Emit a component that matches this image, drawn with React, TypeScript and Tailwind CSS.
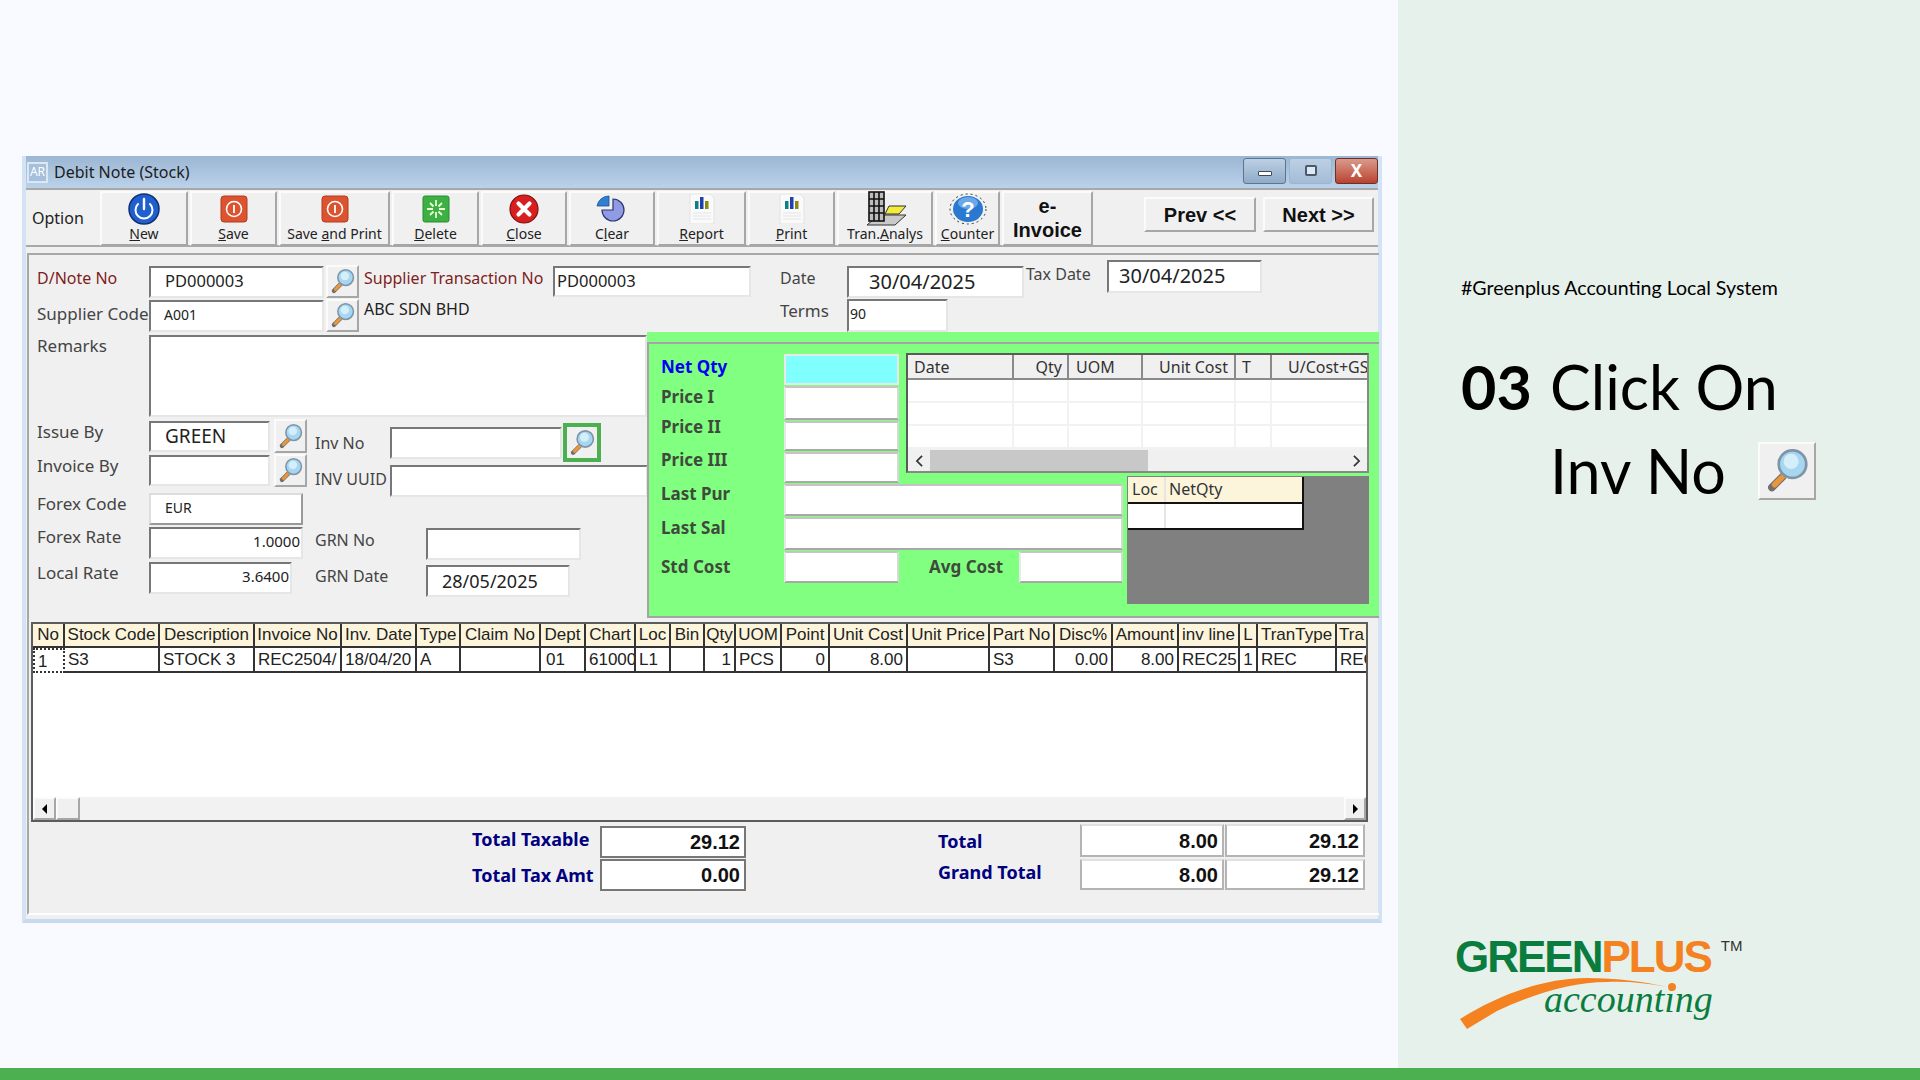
import type { ReactNode } from 'react';

const inset = 'border-2 border-t-[#777] border-l-[#777] border-r-[#e6e6e6] border-b-[#e6e6e6] bg-white';
const label = 'text-[16px] leading-[22px] text-[#444]';
const labelLg = 'text-[17px] leading-[22px] text-[#444]';
const greenInput = 'border-2 border-t-[#c4c4c4] border-l-[#e8e8e8] border-r-[#d8d8d8] border-b-[#a8a8a8] bg-white';
const raised = 'border-2 border-t-[#fbfbfb] border-l-[#fbfbfb] border-r-[#a6a6a6] border-b-[#a6a6a6] bg-[#f0f0f0]';

function Magnifier({ className }: { className: string }) {
  return (
    <svg viewBox="0 0 32 32" className={className}>
      <path d="M13 20 L5 28" stroke="#6f6f6f" strokeWidth="5.5" strokeLinecap="round" />
      <path d="M14 19 L7 26" stroke="#e8983a" strokeWidth="4" strokeLinecap="round" />
      <circle cx="20" cy="11" r="10" fill="#a6d6f0" stroke="#7f94a6" strokeWidth="2" />
      <circle cx="19" cy="9" r="5.5" fill="#d4eefa" />
    </svg>
  );
}

function LookupButton({ className }: { className: string }) {
  return (
    <div className={`flex items-center justify-center ${raised} ${className}`}>
      <Magnifier className="h-[25px] w-[25px]" />
    </div>
  );
}

function NewIcon() {
  return (
    <svg viewBox="0 0 32 32" className="h-[32px] w-[32px]">
      <circle cx="16" cy="16" r="15" fill="#1f5fd0" stroke="#12306f" strokeWidth="1.5" />
      <path d="M10 11 A8.5 8.5 0 1 0 22 11" fill="none" stroke="#fff" strokeWidth="2" strokeLinecap="round" />
      <path d="M16 6 V16" stroke="#fff" strokeWidth="2.4" strokeLinecap="round" />
    </svg>
  );
}

function SaveIcon() {
  return (
    <svg viewBox="0 0 28 28" className="h-[28px] w-[28px]">
      <rect x="1" y="1" width="26" height="26" rx="3" fill="#dc5330" stroke="#b23c1e" />
      <circle cx="14" cy="14" r="7.5" fill="none" stroke="#fff" strokeWidth="1.6" />
      <path d="M14 10 V18" stroke="#fff" strokeWidth="1.8" />
    </svg>
  );
}

function DeleteIcon() {
  return (
    <svg viewBox="0 0 28 28" className="h-[28px] w-[28px]">
      <rect x="1" y="1" width="26" height="26" rx="2" fill="#3cb043" stroke="#2a8a30" />
      <path d="M14 5 V11 M14 17 V23 M5 14 H11 M17 14 H23 M8 8 L11.5 11.5 M16.5 16.5 L20 20 M20 8 L16.5 11.5 M11.5 16.5 L8 20" stroke="#e8ffd8" strokeWidth="1.8" />
    </svg>
  );
}

function CloseIcon() {
  return (
    <svg viewBox="0 0 30 30" className="h-[30px] w-[30px]">
      <circle cx="15" cy="15" r="14" fill="#d81e1e" stroke="#7c1010" strokeWidth="1.2" />
      <path d="M9.5 9.5 L20.5 20.5 M20.5 9.5 L9.5 20.5" stroke="#fff" strokeWidth="4.2" strokeLinecap="round" />
    </svg>
  );
}

function ClearIcon() {
  return (
    <svg viewBox="0 0 32 28" className="h-[28px] w-[32px]">
      <path d="M17 4 A11 11 0 1 1 6 15 H17 Z" fill="#8f9be4" stroke="#2f3570" strokeWidth="1.2" />
      <path d="M1 11 A12 12 0 0 1 13 1 V11 Z" fill="#2f7fd4" stroke="#1e4f8c" strokeWidth="0.8" />
    </svg>
  );
}

function ReportIcon() {
  return (
    <svg viewBox="0 0 26 30" className="h-[30px] w-[26px]">
      <path d="M1 0 H21 L25 4 V30 H1 Z" fill="#fafafa" stroke="#e2e2e2" />
      <rect x="6" y="7" width="3.5" height="8" fill="#0f7f86" />
      <rect x="11" y="3" width="3.5" height="12" fill="#1f3fb0" />
      <rect x="16" y="7" width="3.5" height="8" fill="#8a8a12" />
      <path d="M4 19 H22 M4 22 H22 M4 25 H22" stroke="#e4e4e4" />
    </svg>
  );
}

function TranIcon() {
  return (
    <svg viewBox="0 0 44 36" className="h-[36px] w-[44px]">
      <path d="M16 24 H43 L32 34 H4 Z" fill="#c9c9c9" stroke="#333" />
      <path d="M26 15 H43 L36 23 H22 Z" fill="#f4ec3a" stroke="#333" />
      <rect x="6" y="1" width="15" height="29" fill="#bdbdbd" stroke="#111" strokeWidth="1.6" />
      <path d="M11 1 V30 M16 1 V30 M6 8 H21 M6 15 H21 M6 22 H21" stroke="#111" strokeWidth="1.6" />
    </svg>
  );
}

function CounterIcon() {
  return (
    <svg viewBox="0 0 38 32" className="h-[32px] w-[38px]">
      <ellipse cx="19" cy="16" rx="18" ry="15" fill="none" stroke="#333" strokeWidth="1" strokeDasharray="2 3" />
      <ellipse cx="19" cy="16" rx="15" ry="13" fill="#2a78d0" />
      <ellipse cx="19" cy="10" rx="10" ry="6" fill="#6aa8e8" />
      <text x="19" y="24" textAnchor="middle" fontSize="22" fontWeight="700" fill="#fff" fontFamily="Liberation Sans, sans-serif">?</text>
    </svg>
  );
}

function ToolButton({ icon, children, className }: { icon: ReactNode; children: ReactNode; className: string }) {
  return (
    <div className={`flex flex-col items-center ${raised} ${className}`}>
      <div className="flex h-[31px] items-center justify-center">{icon}</div>
      <div className="text-[14px] leading-[20px] text-[#222]">{children}</div>
    </div>
  );
}

function Toolbar() {
  return (
    <div className="flex h-[59px] items-start border-y-2 border-[#a8a8a8] bg-[#f0f0f0] pt-[1px]">
      <div className="flex h-[53px] w-[74px] items-center pl-[6px] text-[16px] text-[#222]">Option</div>
      <div className="flex gap-[2px]">
        <ToolButton icon={<NewIcon />} className="h-[55px] w-[88px]"><u>N</u>ew</ToolButton>
        <ToolButton icon={<SaveIcon />} className="h-[55px] w-[87px]"><u>S</u>ave</ToolButton>
        <ToolButton icon={<SaveIcon />} className="h-[55px] w-[111px]">Save <u>a</u>nd Print</ToolButton>
        <ToolButton icon={<DeleteIcon />} className="h-[55px] w-[87px]"><u>D</u>elete</ToolButton>
        <ToolButton icon={<CloseIcon />} className="h-[55px] w-[86px]"><u>C</u>lose</ToolButton>
        <ToolButton icon={<ClearIcon />} className="h-[55px] w-[86px]">C<u>l</u>ear</ToolButton>
        <ToolButton icon={<ReportIcon />} className="h-[55px] w-[89px]"><u>R</u>eport</ToolButton>
        <ToolButton icon={<ReportIcon />} className="h-[55px] w-[87px]"><u>P</u>rint</ToolButton>
        <ToolButton icon={<TranIcon />} className="h-[55px] w-[96px]">Tran.<u>A</u>nalys</ToolButton>
        <ToolButton icon={<CounterIcon />} className="h-[55px] w-[65px]"><u>C</u>ounter</ToolButton>
        <div className={`flex h-[55px] w-[91px] flex-col items-center justify-center pb-[2px] font-['Liberation_Sans',sans-serif] text-[20px] leading-[24px] font-bold text-[#111] ${raised}`}>
          <span>e-</span>
          <span>Invoice</span>
        </div>
      </div>
      <div className="mt-[6px] ml-[51px] flex gap-[7px] font-['Liberation_Sans',sans-serif] text-[20px] font-bold text-[#111]">
        <div className={`flex h-[35px] w-[112px] items-center justify-center ${raised}`}>{'Prev <<'}</div>
        <div className={`flex h-[35px] w-[111px] items-center justify-center ${raised}`}>{'Next >>'}</div>
      </div>
    </div>
  );
}

function TitleBar() {
  return (
    <div className="flex h-[32px] items-center bg-gradient-to-b from-[#9cb6d3] to-[#bad2ea]">
      <div className="ml-[1px] flex h-[21px] w-[21px] items-center justify-center border-2 border-[#dbe8f4] bg-[#a5bfdc] text-[12px] text-white">AR</div>
      <div className="ml-[6px] text-[16px] leading-[22px] text-[#1c1c1c]">Debit Note (Stock)</div>
      <div className="mb-[3px] ml-auto flex h-[26px] gap-[3px]">
        <div className="flex w-[43px] items-center justify-center rounded-[3px] border border-[#5d7590] bg-gradient-to-b from-[#bdd0e4] to-[#90abc8]">
          <div className="mt-[6px] h-[5px] w-[14px] rounded-[1px] border border-[#3a4a5c] bg-white" />
        </div>
        <div className="flex w-[43px] items-center justify-center rounded-[3px] border border-[#9db6d0] bg-gradient-to-b from-[#bdd0e4] to-[#a3bcd6]">
          <div className="h-[11px] w-[12px] rounded-[2px] border-2 border-[#4a5a6c] bg-[#dfe9f3]" />
        </div>
        <div className="flex w-[43px] items-center justify-center rounded-[3px] border border-[#6d3028] bg-gradient-to-b from-[#d99a8c] to-[#b8402e] text-[17px] leading-none font-bold text-white">X</div>
      </div>
    </div>
  );
}

function HeaderRows() {
  return (
    <div className="flex h-[77px]">
      <div className="ml-[8px] w-[322px] pt-[10px]">
        <div className="flex h-[33px] items-center">
          <div className={`mb-[8px] w-[112px] ${label} !text-[#7f1d1d]`}>D/Note No</div>
          <div className={`flex h-[32px] w-[175px] items-center pb-[1px] pl-[14px] text-[16.5px] text-[#222] ${inset}`}>PD000003</div>
          <LookupButton className="ml-[2px] h-[33px] w-[33px]" />
        </div>
        <div className="mt-[1px] flex h-[33px] items-center">
          <div className={`mb-[4px] w-[112px] whitespace-nowrap ${labelLg}`}>Supplier Code</div>
          <div className={`flex h-[32px] w-[175px] items-center pb-[3px] pl-[13px] text-[14px] text-[#222] ${inset}`}>A001</div>
          <LookupButton className="ml-[2px] h-[33px] w-[33px]" />
        </div>
      </div>
      <div className="ml-[5px] w-[387px] pt-[10px]">
        <div className="flex h-[33px] items-center">
          <div className={`mb-[7px] w-[189px] whitespace-nowrap ${label} !text-[#7f1d1d]`}>Supplier Transaction No</div>
          <div className={`flex h-[31px] w-[198px] items-center pb-[1px] pl-[2px] text-[16.5px] text-[#222] ${inset}`}>PD000003</div>
        </div>
        <div className="mt-[1px] flex h-[33px] items-center">
          <div className={`mb-[13px] ${label} !text-[#222]`}>ABC SDN BHD</div>
        </div>
      </div>
      <div className="ml-[29px] w-[244px] pt-[10px]">
        <div className="flex h-[33px] items-center">
          <div className={`mb-[8px] w-[67px] ${label}`}>Date</div>
          <div className={`flex h-[32px] w-[177px] items-center pt-[1px] pl-[20px] text-[20px] text-[#222] ${inset}`}>30/04/2025</div>
        </div>
        <div className="mt-[1px] flex h-[33px] items-center">
          <div className={`mb-[10px] w-[67px] ${labelLg}`}>Terms</div>
          <div className={`flex h-[33px] w-[101px] items-center pb-[4px] pl-[1px] text-[14px] text-[#222] ${inset}`}>90</div>
        </div>
      </div>
      <div className="mt-[5px] ml-[2px] flex h-[33px] items-center">
        <div className={`mb-[6px] w-[81px] ${label}`}>Tax Date</div>
        <div className={`flex h-[33px] w-[155px] items-center pb-[2px] pl-[10px] text-[20px] text-[#222] ${inset}`}>30/04/2025</div>
      </div>
    </div>
  );
}

function LeftFields() {
  return (
    <div className="w-[618px] pt-[3px] pl-[8px]">
      <div className="flex">
        <div className={`w-[112px] ${labelLg}`}>Remarks</div>
        <div className={`h-[82px] w-[498px] ${inset}`} />
      </div>
      <div className="flex">
        <div className="w-[270px] pt-[2px]">
          <div className="flex h-[34px] items-center">
            <div className={`mb-[8px] w-[112px] ${labelLg}`}>Issue By</div>
            <div className={`flex h-[31px] w-[121px] items-center pt-[1px] pl-[14px] text-[19px] text-[#222] ${inset}`}>GREEN</div>
            <LookupButton className="ml-[4px] h-[34px] w-[33px]" />
          </div>
          <div className="mt-[1px] flex h-[33px] items-center">
            <div className={`mb-[10px] w-[112px] ${labelLg}`}>Invoice By</div>
            <div className={`h-[31px] w-[121px] ${inset}`} />
            <LookupButton className="ml-[4px] h-[33px] w-[33px]" />
          </div>
          <div className="mt-[6px] flex h-[32px] items-center">
            <div className={`mb-[10px] w-[112px] ${labelLg}`}>Forex Code</div>
            <div className={`flex h-[32px] w-[154px] items-center pb-[3px] pl-[14px] text-[14px] text-[#222] ${inset} !border-t-[#ddd] !border-r-[#999] !border-b-[#999] !border-l-[#ddd]`}>EUR</div>
          </div>
          <div className="mt-[2px] flex h-[32px] items-center">
            <div className={`mb-[12px] w-[112px] ${labelLg}`}>Forex Rate</div>
            <div className={`flex h-[32px] w-[154px] items-center justify-end pr-[1px] pb-[4px] text-[15px] text-[#222] ${inset}`}>1.0000</div>
          </div>
          <div className="mt-[3px] flex h-[32px] items-center">
            <div className={`mb-[10px] w-[112px] ${labelLg}`}>Local Rate</div>
            <div className={`flex h-[32px] w-[143px] items-center justify-end pr-[1px] pb-[4px] text-[15px] text-[#222] ${inset}`}>3.6400</div>
          </div>
        </div>
        <div className="ml-[8px] pt-[6px]">
          <div className="flex h-[39px] items-center">
            <div className={`w-[75px] ${label}`}>Inv No</div>
            <div className={`h-[32px] w-[172px] ${inset}`} />
            <div className="ml-[1px] flex h-[39px] w-[38px] items-center justify-center border-4 border-[#4caf50] bg-[#f0f0f0]">
              <Magnifier className="h-[26px] w-[26px]" />
            </div>
          </div>
          <div className="mt-[3px] flex h-[32px] items-center">
            <div className={`mb-[4px] w-[75px] whitespace-nowrap ${label}`}>INV UUID</div>
            <div className={`h-[32px] w-[258px] ${inset}`} />
          </div>
          <div className="mt-[31px] flex h-[32px] items-center">
            <div className={`mb-[8px] w-[111px] ${label}`}>GRN No</div>
            <div className={`h-[32px] w-[155px] ${inset}`} />
          </div>
          <div className="mt-[5px] flex h-[32px] items-center">
            <div className={`mb-[10px] w-[111px] ${label}`}>GRN Date</div>
            <div className={`flex h-[32px] w-[144px] items-center pl-[14px] text-[18px] text-[#222] ${inset}`}>28/05/2025</div>
          </div>
        </div>
      </div>
    </div>
  );
}

const greenLabel = 'text-[17px] leading-[22px] font-bold text-[#3f4a3c]';

function PriceColumn() {
  return (
    <div className="row-span-2 pt-[10px] pl-[12px]">
      <div className="flex h-[31px] items-center">
        <div className="mb-[5px] w-[123px] text-[17px] leading-[22px] font-bold text-[#0000f0]">Net Qty</div>
        <div className="h-[31px] w-[115px] border-2 border-[#e8e8e8] bg-[#80ffff]" />
      </div>
      <div className="mt-[1px] flex h-[34px] items-center">
        <div className={`mb-[12px] w-[123px] ${greenLabel}`}>Price I</div>
        <div className={`h-[34px] w-[115px] ${greenInput}`} />
      </div>
      <div className="mt-[1px] flex h-[30px] items-center">
        <div className={`mb-[18px] w-[123px] ${greenLabel}`}>Price II</div>
        <div className={`h-[30px] w-[115px] ${greenInput}`} />
      </div>
      <div className="mt-[1px] flex h-[31px] items-center">
        <div className={`mb-[16px] w-[123px] ${greenLabel}`}>Price III</div>
        <div className={`h-[31px] w-[115px] ${greenInput}`} />
      </div>
    </div>
  );
}

const historyCols = [
  { name: 'Date', cls: 'pl-[6px] text-left' },
  { name: 'Qty', cls: 'pr-[5px] text-right' },
  { name: 'UOM', cls: 'pl-[7px] text-left' },
  { name: 'Unit Cost', cls: 'pr-[6px] text-right' },
  { name: 'T', cls: 'pl-[6px] text-left' },
  { name: 'U/Cost+GST', cls: 'pl-[16px] text-left' },
];

function HistoryGrid() {
  return (
    <div className="col-span-2 mt-[9px] ml-[1px] h-[120px] w-[463px] overflow-hidden border-2 border-[#5a5a5a] border-r-[#888] border-b-[#888] bg-white">
      <div className="grid h-[25px] grid-cols-[106px_55px_74px_93px_36px_99px] whitespace-nowrap">
        {historyCols.map((c) => (
          <div key={c.name} className={`overflow-hidden border-r-2 border-b-2 border-[#8a8a8a] bg-[#f0f0f0] text-[16px] leading-[24px] text-[#333] ${c.cls}`}>
            {c.name}
          </div>
        ))}
      </div>
      {[0, 1, 2].map((r) => (
        <div key={r} className="grid h-[23px] grid-cols-[106px_55px_74px_93px_36px_99px]">
          {historyCols.map((c) => (
            <div key={c.name} className="border-r-2 border-b-2 border-[#f2f2f2]" />
          ))}
        </div>
      ))}
      <div className="flex h-[24px] items-center bg-[#f0f0f0]">
        <div className="flex w-[22px] justify-center">
          <svg viewBox="0 0 10 14" className="h-[12px] w-[9px]"><path d="M8 1 L2 7 L8 13" fill="none" stroke="#333" strokeWidth="2" /></svg>
        </div>
        <div className="h-[22px] w-[218px] bg-[#c8c8c8]" />
        <div className="ml-auto flex w-[22px] justify-center">
          <svg viewBox="0 0 10 14" className="h-[12px] w-[9px]"><path d="M2 1 L8 7 L2 13" fill="none" stroke="#333" strokeWidth="2" /></svg>
        </div>
      </div>
    </div>
  );
}

function CostRows() {
  return (
    <div className="col-span-2 row-start-3 pl-[12px]">
      <div className="flex h-[32px] items-center">
        <div className={`mb-[12px] w-[123px] ${greenLabel}`}>Last Pur</div>
        <div className={`h-[32px] w-[339px] ${greenInput}`} />
      </div>
      <div className="mt-[1px] flex h-[33px] items-center">
        <div className={`mb-[12px] w-[123px] ${greenLabel}`}>Last Sal</div>
        <div className={`h-[33px] w-[339px] ${greenInput}`} />
      </div>
      <div className="mt-[1px] flex h-[32px] items-center">
        <div className={`w-[123px] ${greenLabel}`}>Std Cost</div>
        <div className={`h-[32px] w-[115px] ${greenInput}`} />
        <div className={`w-[120px] pl-[30px] whitespace-nowrap ${greenLabel}`}>Avg Cost</div>
        <div className={`h-[32px] w-[104px] ${greenInput}`} />
      </div>
    </div>
  );
}

function LocBox() {
  return (
    <div className="col-start-3 row-span-2 row-start-2 bg-[#808080] pt-[1px] pl-[1px]">
      <div className="w-[176px] border-r-2 border-b-2 border-[#111] bg-white text-[16px] text-[#333]">
        <div className="grid h-[27px] grid-cols-[38px_1fr] border-b-2 border-[#111] bg-[#fcf5dc] leading-[24px]">
          <div className="border-r-2 border-[#e5e5e5] pl-[4px]">Loc</div>
          <div className="pl-[3px]">NetQty</div>
        </div>
        <div className="grid h-[24px] grid-cols-[38px_1fr]">
          <div className="border-r-2 border-[#e5e5e5]" />
          <div />
        </div>
      </div>
    </div>
  );
}

function GreenPanel() {
  return (
    <div className="flex w-[732px] flex-col bg-[#80ff80] pt-[10px]">
      <div className="grid flex-1 grid-cols-[256px_222px_242px] grid-rows-[132px_8px_120px] border-t-2 border-b-2 border-l-2 border-[#a4a4a4]">
        <PriceColumn />
        <HistoryGrid />
        <CostRows />
        <LocBox />
      </div>
    </div>
  );
}

const stockCols = 'grid-cols-[32px_95px_95px_87px_75px_44px_80px_45px_50px_35px_34px_31px_46px_48px_78px_82px_65px_58px_66px_61px_18px_79px_31px]';

const stockHeads = ['No', 'Stock Code', 'Description', 'Invoice No', 'Inv. Date', 'Type', 'Claim No', 'Dept', 'Chart', 'Loc', 'Bin', 'Qty', 'UOM', 'Point', 'Unit Cost', 'Unit Price', 'Part No', 'Disc%', 'Amount', 'inv line', 'L', 'TranType', 'Tra'];

const stockRow = [
  { v: '1', cls: 'text-left' },
  { v: 'S3', cls: 'text-left' },
  { v: 'STOCK 3', cls: 'text-left' },
  { v: 'REC2504/', cls: 'text-left' },
  { v: '18/04/20', cls: 'text-left' },
  { v: 'A', cls: 'text-left' },
  { v: '', cls: 'text-left' },
  { v: '01', cls: 'text-left pl-[5px]' },
  { v: '61000', cls: 'text-left' },
  { v: 'L1', cls: 'text-left' },
  { v: '', cls: 'text-left' },
  { v: '1', cls: 'text-right' },
  { v: 'PCS', cls: 'text-left' },
  { v: '0', cls: 'text-right' },
  { v: '8.00', cls: 'text-right' },
  { v: '', cls: 'text-left' },
  { v: 'S3', cls: 'text-left' },
  { v: '0.00', cls: 'text-right' },
  { v: '8.00', cls: 'text-right' },
  { v: 'REC25', cls: 'text-left' },
  { v: '1', cls: 'text-center' },
  { v: 'REC', cls: 'text-left' },
  { v: 'REC', cls: 'text-left' },
];

function StockGrid() {
  return (
    <div className="mt-[4px] ml-[2px] flex h-[200px] w-[1337px] flex-col overflow-hidden border-2 border-[#5c5c5c] bg-white font-['Liberation_Sans',sans-serif] text-[17px] text-[#222]">
      <div className={`grid h-[24px] shrink-0 whitespace-nowrap ${stockCols}`}>
        {stockHeads.map((h) => (
          <div key={h} className="overflow-hidden border-r-2 border-b-2 border-[#333] bg-[#fcf5dc] text-center leading-[22px]">
            {h}
          </div>
        ))}
      </div>
      <div className={`grid h-[25px] shrink-0 whitespace-nowrap ${stockCols}`}>
        {stockRow.map((c, i) => (
          <div key={i} className={`overflow-hidden border-r-2 border-b-2 border-[#333] px-[3px] leading-[24px] ${i === 0 ? 'border-2 border-dotted border-[#111] leading-[20px]' : ''} ${c.cls}`}>
            {c.v}
          </div>
        ))}
      </div>
      <div className="flex-1" />
      <div className="flex h-[23px] shrink-0 bg-[#f2f2f2]">
        <div className={`flex w-[23px] items-center justify-center ${raised}`}>
          <div className="h-0 w-0 border-y-[5px] border-r-[5px] border-y-transparent border-r-black" />
        </div>
        <div className={`w-[24px] ${raised}`} />
        <div className={`ml-auto flex w-[22px] items-center justify-center ${raised}`}>
          <div className="h-0 w-0 border-y-[5px] border-l-[5px] border-y-transparent border-l-black" />
        </div>
      </div>
    </div>
  );
}

const totalLabel = "whitespace-nowrap font-['Noto_Sans',sans-serif] text-[18px] leading-[22px] font-bold text-[#000080]";
const totalValue = "flex items-center justify-end font-['Liberation_Sans',sans-serif] text-[20px] font-bold text-[#111]";
const lightBox = 'border-2 border-[#b4b4b4] border-t-[#e0e0e0] bg-white';

function Totals() {
  return (
    <div className="flex h-[91px]">
      <div className="ml-[443px] pt-[4px]">
        <div className="flex h-[32px] items-center">
          <div className={`mb-[6px] w-[128px] ${totalLabel}`}>Total Taxable</div>
          <div className={`h-[32px] w-[146px] border-2 border-[#777] bg-white pr-[4px] ${totalValue}`}>29.12</div>
        </div>
        <div className="mt-[1px] flex h-[32px] items-center">
          <div className={`w-[128px] ${totalLabel}`}>Total Tax Amt</div>
          <div className={`h-[32px] w-[146px] border-2 border-[#777] bg-white pr-[4px] ${totalValue}`}>0.00</div>
        </div>
      </div>
      <div className="ml-[192px] pt-[2px]">
        <div className="flex h-[33px] items-center">
          <div className={`w-[142px] ${totalLabel}`}>Total</div>
          <div className={`h-[33px] w-[144px] pr-[4px] ${lightBox} ${totalValue}`}>8.00</div>
          <div className={`ml-[1px] h-[33px] w-[140px] pr-[4px] ${lightBox} ${totalValue}`}>29.12</div>
        </div>
        <div className="mt-[2px] flex h-[31px] items-center">
          <div className={`mb-[5px] w-[142px] ${totalLabel}`}>Grand Total</div>
          <div className={`h-[31px] w-[144px] pr-[4px] ${lightBox} ${totalValue}`}>8.00</div>
          <div className={`ml-[1px] h-[31px] w-[140px] pr-[4px] ${lightBox} ${totalValue}`}>29.12</div>
        </div>
      </div>
    </div>
  );
}

function DebitNoteWindow() {
  return (
    <div className="flex h-[767px] w-[1360px] flex-col border-x-4 border-b-4 border-x-[#d3e3f3] border-b-[#c6daee] bg-[#f0f0f0] font-['Noto_Sans',sans-serif]">
      <TitleBar />
      <Toolbar />
      <div className="mt-[6px] ml-[1px] flex h-[662px] w-[1352px] flex-col border-t-2 border-b-2 border-l-2 border-t-[#a8a8a8] border-b-white border-l-[#a8a8a8]">
        <HeaderRows />
        <div className="flex h-[286px] shrink-0">
          <LeftFields />
          <GreenPanel />
        </div>
        <StockGrid />
        <Totals />
      </div>
    </div>
  );
}

function Logo() {
  return (
    <div className="relative mt-[422px] ml-[-6px] h-[90px] w-[300px]">
      <div className="flex items-start">
        <div className="font-['Liberation_Sans',sans-serif] text-[44px] leading-[44px] font-bold tracking-[-2px]">
          <span className="text-[#0a7d3e]">GREEN</span>
          <span className="text-[#f58220]">PLUS</span>
        </div>
        <div className="mt-[3px] ml-[10px] font-['Liberation_Sans',sans-serif] text-[15px] leading-[16px] text-[#333]">TM</div>
      </div>
      <svg viewBox="0 0 230 60" className="absolute top-[36px] left-[2px] h-[60px] w-[230px]">
        <path d="M3 48 C40 25 85 7 130 7 C160 7 190 11 210 16 C190 12 170 10 150 11 C115 11 76 23 40 40 L10 58 Z" fill="#f58220" />
      </svg>
      <div className="absolute top-[42px] left-[89px] font-['Liberation_Serif',serif] text-[38px] leading-[44px] text-[#0a7d3e] italic">accounting</div>
      <div className="absolute top-[48px] left-[213px] h-[8px] w-[8px] rounded-full bg-[#f58220]" />
    </div>
  );
}

export default function App() {
  return (
    <div className="flex h-[1080px] w-[1920px] flex-col overflow-hidden">
      <div className="flex h-[1068px]">
        <div className="w-[1398px] bg-[#f8faff] pt-[156px] pl-[22px]">
          <DebitNoteWindow />
        </div>
        <div className="w-[522px] bg-[#e7f1ec] pt-[276px] pl-[63px] font-['Lato',sans-serif] text-black">
          <div className="text-[19.6px] leading-[24px]">#Greenplus Accounting Local System</div>
          <div className="mt-[45px] flex text-[61px] leading-[84px]">
            <div className="w-[89px] font-bold">03</div>
            <div>
              <div>Click On</div>
              <div className="flex items-center">
                <span>Inv No</span>
                <div className={`mt-[-1px] ml-[32px] flex h-[58px] w-[58px] items-center justify-center ${raised}`}>
                  <Magnifier className="h-[44px] w-[44px]" />
                </div>
              </div>
            </div>
          </div>
          <Logo />
        </div>
      </div>
      <div className="h-[12px] bg-[#4caf50]" />
    </div>
  );
}
